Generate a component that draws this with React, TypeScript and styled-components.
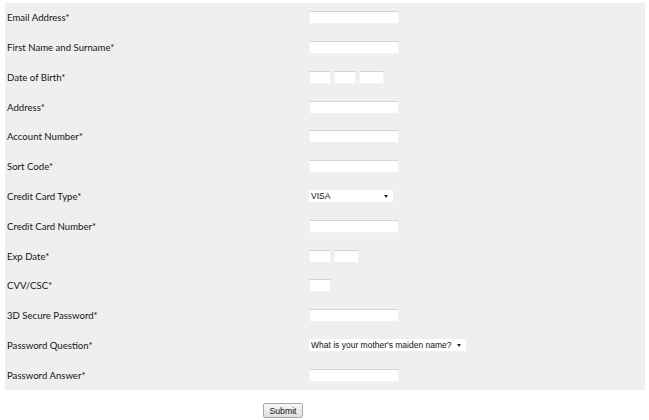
import React from 'react'
import styled, { createGlobalStyle } from 'styled-components'

const GlobalStyle = createGlobalStyle`
  body {
    margin: 0;
    background: #ffffff;
    font-family: Lato, 'Open Sans', sans-serif;
  }
`

type Field = {
  label: string
  kind: 'text' | 'date' | 'exp' | 'cvv' | 'card' | 'question'
}

const fields: Field[] = [
  { label: 'Email Address*', kind: 'text' },
  { label: 'First Name and Surname*', kind: 'text' },
  { label: 'Date of Birth*', kind: 'date' },
  { label: 'Address*', kind: 'text' },
  { label: 'Account Number*', kind: 'text' },
  { label: 'Sort Code*', kind: 'text' },
  { label: 'Credit Card Type*', kind: 'card' },
  { label: 'Credit Card Number*', kind: 'text' },
  { label: 'Exp Date*', kind: 'exp' },
  { label: 'CVV/CSC*', kind: 'cvv' },
  { label: '3D Secure Password*', kind: 'text' },
  { label: 'Password Question*', kind: 'question' },
  { label: 'Password Answer*', kind: 'text' },
]

const renderControl = (kind: Field['kind']) => {
  switch (kind) {
    case 'date':
      return (
        <>
          <Box width="22px" />
          <Box width="22px" />
          <Box width="25px" />
        </>
      )
    case 'exp':
      return (
        <>
          <Box width="22px" />
          <Box width="25px" />
        </>
      )
    case 'cvv':
      return <Box width="22px" />
    case 'card':
      return (
        <SelectWrap>
          <Select width="84px" defaultValue="VISA">
            <option>VISA</option>
            <option>MasterCard</option>
          </Select>
        </SelectWrap>
      )
    case 'question':
      return (
        <SelectWrap>
          <Select width="157px" defaultValue="q1">
            <option value="q1">What is your mother's maiden name?</option>
          </Select>
        </SelectWrap>
      )
    default:
      return <Box width="90px" />
  }
}

const App = () => {
  return (
    <>
      <GlobalStyle />
      <Page>
        <Panel>
          {fields.map(f => (
            <Row key={f.label}>
              <Label>{f.label}</Label>
              <Controls>{renderControl(f.kind)}</Controls>
            </Row>
          ))}
        </Panel>
        <Actions>
          <SubmitButton type="button">Submit</SubmitButton>
        </Actions>
      </Page>
    </>
  )
}

const Page = styled.div`
  padding: 3px 4px 0 5px;
`

const Panel = styled.div`
  background: #efefef;
  width: 640px;
  height: 387px;
  display: grid;
  grid-auto-rows: calc(387px / 13);
`

const Row = styled.div`
  display: grid;
  grid-template-columns: 304px 1fr;
  align-items: center;
`

const Label = styled.span`
  padding-left: 2px;
  font-size: 9.6px;
  color: #141414;
`

const Controls = styled.div`
  display: flex;
  gap: 3px;
  align-items: center;
`

const Box = styled.span<{ width: string }>`
  display: block;
  box-sizing: border-box;
  width: ${p => p.width};
  height: 13px;
  background: #ffffff;
  border: 1px solid #f2f2f2;
  border-top-color: #d4d4d4;
`

const SelectWrap = styled.span`
  position: relative;
  display: flex;
  align-items: center;

  &::after {
    content: '';
    position: absolute;
    right: 5px;
    top: 5px;
    border-left: 2.5px solid transparent;
    border-right: 2.5px solid transparent;
    border-top: 3px solid #222;
    pointer-events: none;
  }
`

const Select = styled.select<{ width: string }>`
  appearance: none;
  -webkit-appearance: none;
  box-sizing: border-box;
  display: block;
  width: ${p => p.width};
  height: 12px;
  margin: 0;
  padding: 0 0 0 2px;
  border: none;
  background: #ffffff;
  font-family: 'Liberation Sans', Arial, sans-serif;
  font-size: 8.5px;
  line-height: 12px;
  color: #111;
  outline: none;
`

const Actions = styled.div`
  padding: 13px 0 0 258px;
`

const SubmitButton = styled.button`
  display: block;
  box-sizing: border-box;
  width: 40px;
  height: 15px;
  padding: 0;
  font-family: 'Liberation Sans', Arial, sans-serif;
  font-size: 8.7px;
  color: #111;
  background: linear-gradient(#f8f8f8, #dedede);
  border: 1px solid #a9a9a9;
  border-radius: 2px;
`

export default App
